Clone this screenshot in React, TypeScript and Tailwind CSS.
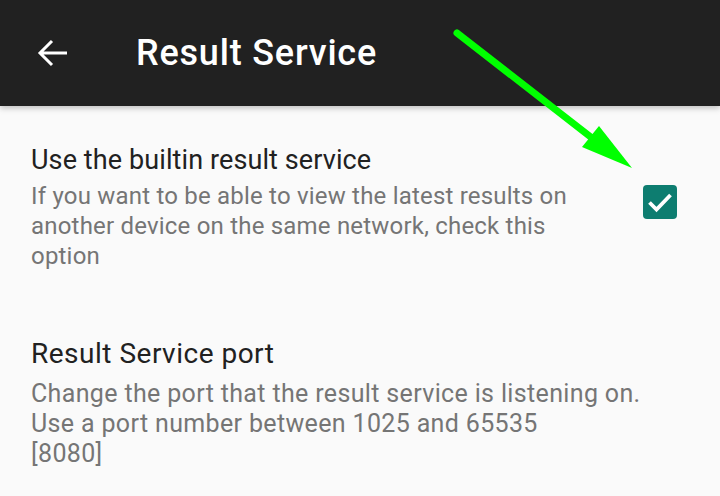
import React from "react";

function Checkbox() {
  return (
    <svg width="34" height="34" viewBox="0 0 34 34">
      <rect x="0" y="0" width="34" height="34" rx="4" fill="#0d7d70" />
      <path d="M6.5 17.5 L13.5 24.5 L27.5 10" fill="none" stroke="#ffffff" strokeWidth="3.8" />
    </svg>
  );
}

function PrefRow(props: {
  title: string;
  summary: string[];
  checked?: boolean;
  titleClass: string;
  summaryClass: string;
  gapClass: string;
}) {
  const { title, summary, checked, titleClass, summaryClass, gapClass } = props;
  return (
    <div className="flex items-center pl-[31px] pr-[43px]">
      <div className="flex-1">
        <p className={"text-[#212121] " + titleClass}>{title}</p>
        <div className={gapClass}>
          {summary.map((line) => (
            <p key={line} className={"leading-[30px] text-[#757575] " + summaryClass}>
              {line}
            </p>
          ))}
        </div>
      </div>
      {checked && (
        <div className="ml-4 mb-[11px]">
          <Checkbox />
        </div>
      )}
    </div>
  );
}

export default function App() {
  return (
    <div
      className="relative w-[720px] h-[496px] overflow-hidden bg-[#fafafa]"
      style={{ fontFamily: "Roboto, 'Noto Sans', sans-serif" }}
    >
      <div className="flex items-center h-[106px] bg-[#212121] shadow-[0_2px_6px_rgba(0,0,0,0.25)] relative z-10">
        <svg width="32" height="32" viewBox="0 0 32 32" className="ml-[37px]">
          <path d="M30 16 H4 M15 4 L3 16 L15 28" fill="none" stroke="#ffffff" strokeWidth="3" />
        </svg>
        <h1 className="ml-[67px] text-[36px] tracking-[0.8px] font-medium text-white">Result Service</h1>
      </div>

      <div className="pt-[37px]">
        <PrefRow
          title="Use the builtin result service"
          titleClass="text-[27px] leading-[34px] tracking-[0.1px]"
          summaryClass="text-[24px] tracking-[0.2px]"
          gapClass="mt-[4px]"
          summary={[
            "If you want to be able to view the latest results on",
            "another device on the same network, check this",
            "option",
          ]}
          checked
        />
        <div className="mt-[66px]">
          <PrefRow
            title="Result Service port"
            titleClass="text-[28px] leading-[34px] tracking-[0.5px]"
            summaryClass="text-[25px] tracking-[0.35px]"
            gapClass="mt-[8px]"
            summary={[
              "Change the port that the result service is listening on.",
              "Use a port number between 1025 and 65535",
              "[8080]",
            ]}
          />
        </div>
      </div>

      <svg className="absolute inset-0 z-20 pointer-events-none" width="720" height="496">
        <line x1="457" y1="33" x2="592" y2="138" stroke="#00ff00" strokeWidth="7" strokeLinecap="round" />
        <polygon points="632,168 582,147 599,126" fill="#00ff00" />
      </svg>
    </div>
  );
}
